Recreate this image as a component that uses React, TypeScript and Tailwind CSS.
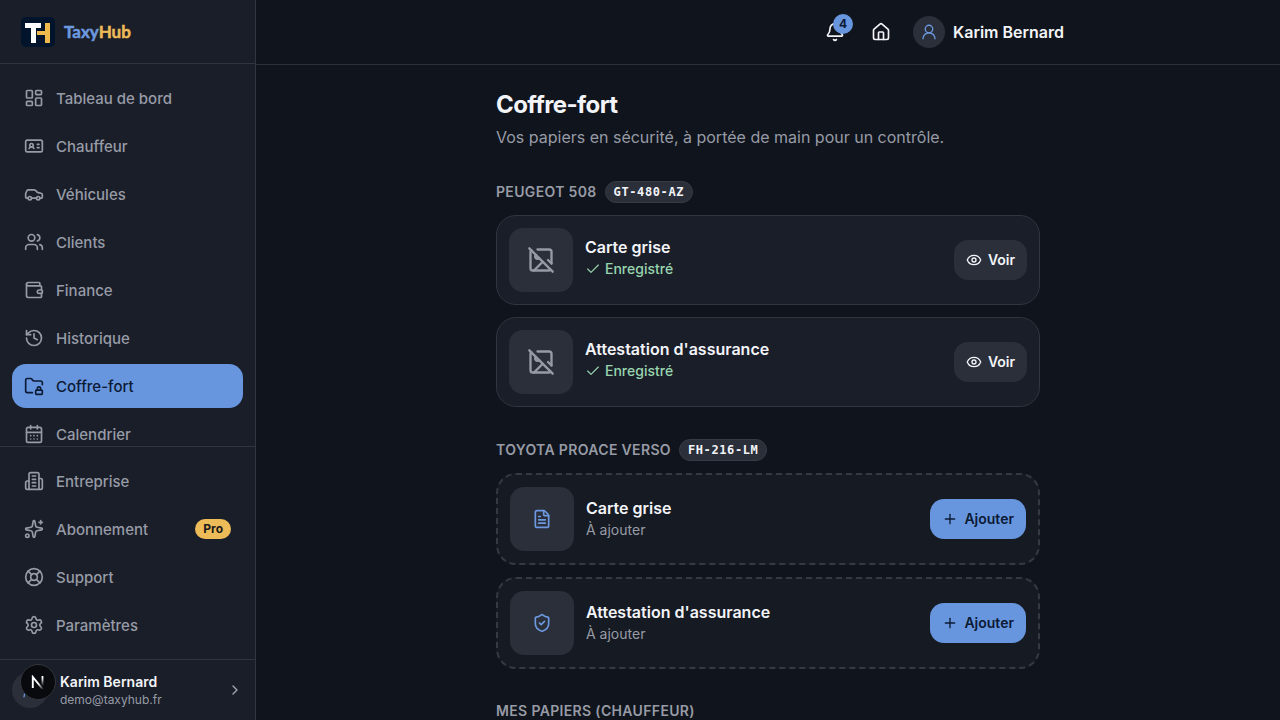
import type { ReactNode } from 'react'
import {
  Bell, CalendarDays, Car, Check, ChevronRight, Eye, FileText, FolderLock, History, House, IdCard,
  ImageOff, LayoutDashboard, LifeBuoy, Plus, Settings, ShieldCheck, Sparkles, UserRound, Users, Wallet,
} from 'lucide-react'
import type { LucideIcon } from 'lucide-react'

interface NavEntry {
  label: string
  icon: LucideIcon | typeof Building
  active?: boolean
  badge?: string
}

interface Doc {
  title: string
  icon: LucideIcon
}

const mainNav: NavEntry[] = [
  { label: 'Tableau de bord', icon: LayoutDashboard },
  { label: 'Chauffeur', icon: IdCard },
  { label: 'Véhicules', icon: Car },
  { label: 'Clients', icon: Users },
  { label: 'Finance', icon: Wallet },
  { label: 'Historique', icon: History },
  { label: 'Coffre-fort', icon: FolderLock, active: true },
  { label: 'Calendrier', icon: CalendarDays },
]

const secondaryNav: NavEntry[] = [
  { label: 'Entreprise', icon: Building },
  { label: 'Abonnement', icon: Sparkles, badge: 'Pro' },
  { label: 'Support', icon: LifeBuoy },
  { label: 'Paramètres', icon: Settings },
]

const docs: Doc[] = [
  { title: 'Carte grise', icon: FileText },
  { title: "Attestation d'assurance", icon: ShieldCheck },
]

function Building({ size = 24, strokeWidth = 2, className }: { size?: number | string; strokeWidth?: number | string; className?: string }) {
  return (
    <svg width={size} height={size} viewBox="0 0 24 24" fill="none" stroke="currentColor" strokeWidth={strokeWidth}
      strokeLinecap="round" strokeLinejoin="round" className={className}>
      <path d="M6 22V4a2 2 0 0 1 2-2h8a2 2 0 0 1 2 2v18Z" />
      <path d="M6 12H4a2 2 0 0 0-2 2v6a2 2 0 0 0 2 2h2" />
      <path d="M18 9h2a2 2 0 0 1 2 2v9a2 2 0 0 1-2 2h-2" />
      <path d="M10 6h4M10 10h4M10 14h4M10 18h4" />
    </svg>
  )
}

function Logo() {
  return (
    <div className="flex items-center gap-2">
      <svg width="36" height="30" viewBox="0 0 36 30">
        <rect x="1" width="34" height="30" rx="5" fill="#02142c" />
        <path d="M5 6h16v5h-5v15h-5V11H5z" fill="#fff" />
        <path d="M25 6h5v20h-5v-8h-8v-4h8z" fill="#f0b94b" />
      </svg>
      <span className="text-[17px] font-bold leading-6 font-['Lato',sans-serif] text-[#6c99df] [-webkit-text-stroke:0.5px_currentColor]">
        Taxy<span className="text-[#edbb57]">Hub</span>
      </span>
    </div>
  )
}

function NavItem({ item }: { item: NavEntry }) {
  const Icon = item.icon
  return (
    <a className={`flex h-11 shrink-0 items-center gap-3 rounded-[14px] px-3 text-[15px] font-medium ${item.active ? 'bg-[#6896de] text-[#0b1a35]' : 'text-[#979ba6]'}`}>
      <Icon size={20} strokeWidth={2} className="shrink-0" />
      <span className="pt-0.5">{item.label}</span>
      {item.badge && (
        <span className="ml-auto rounded-full bg-[#edbb57] px-2 text-xs leading-5 font-bold text-[#1b1a1c]">{item.badge}</span>
      )}
    </a>
  )
}

function Sidebar() {
  return (
    <aside className="flex w-64 shrink-0 flex-col border-r border-[#30353f] bg-[#1a1e29]">
      <div className="flex h-16 shrink-0 items-center border-b border-[#30353f] px-5">
        <Logo />
      </div>
      <nav className="flex min-h-0 flex-1 flex-col gap-1 overflow-hidden p-3">
        {mainNav.map(item => <NavItem key={item.label} item={item} />)}
      </nav>
      <nav className="flex shrink-0 flex-col gap-1 border-t border-[#30353f] p-3">
        {secondaryNav.map(item => <NavItem key={item.label} item={item} />)}
      </nav>
      <div className="relative flex h-[61px] shrink-0 items-center gap-3 border-t border-[#30353f] px-3">
        <div className="flex h-9 w-9 items-center justify-center rounded-full bg-[#2a2f3a] text-[#6c99df]">
          <UserRound size={18} strokeWidth={1.75} />
        </div>
        <div className="flex-1 pt-0.5">
          <p className="text-sm leading-[18px] font-semibold text-[#f3f4f8]">Karim Bernard</p>
          <p className="text-xs leading-[18px] text-[#979ba6]">demo@taxyhub.fr</p>
        </div>
        <ChevronRight size={16} className="text-[#a3a6af]" />
        <DevBadge />
      </div>
    </aside>
  )
}

// Floating dev tools button, sits over the avatar
function DevBadge() {
  return (
    <div className="absolute top-1 left-5 flex h-9 w-9 items-center justify-center rounded-full border border-[#33363d] bg-[#080a0d]">
      <svg width="14" height="14" viewBox="0 0 14 14" fill="none">
        <defs>
          <linearGradient id="n-diag" x1="8" y1="8" x2="13" y2="14" gradientUnits="userSpaceOnUse">
            <stop stopColor="#fff" />
            <stop offset="1" stopColor="#fff" stopOpacity="0" />
          </linearGradient>
          <linearGradient id="n-stem" x1="11" y1="3" x2="11" y2="11" gradientUnits="userSpaceOnUse">
            <stop stopColor="#fff" />
            <stop offset="1" stopColor="#fff" stopOpacity="0" />
          </linearGradient>
        </defs>
        <path d="M1.800 13V2L12 14.500" stroke="url(#n-diag)" strokeWidth="1.900" />
        <path d="M11.500 1v10" stroke="url(#n-stem)" strokeWidth="1.800" />
      </svg>
    </div>
  )
}

function Header() {
  return (
    <header className="h-[65px] shrink-0 border-b border-[#2b3039]">
      <div className="mx-auto flex h-full max-w-2xl items-center justify-end px-10 text-[#f3f4f8]">
        <div className="relative mr-[26px]">
          <Bell size={20} strokeWidth={2} />
          <span className="absolute -top-2 left-2 flex h-5 w-5 items-center justify-center rounded-full bg-[#6896de] text-xs font-bold text-[#0b1a35]">4</span>
        </div>
        <House size={20} strokeWidth={2} className="mr-[22px]" />
        <div className="mr-2 flex h-8 w-8 items-center justify-center rounded-full bg-[#2a2f3a] text-[#6c99df]">
          <UserRound size={18} strokeWidth={1.75} />
        </div>
        <span className="font-semibold">Karim Bernard</span>
      </div>
    </header>
  )
}

function Section({ title, plate, children }: { title: string; plate?: string; children?: ReactNode }) {
  return (
    <section className="mt-8">
      <div className="mb-3 flex items-center gap-2">
        <h2 className="text-sm font-semibold tracking-[0.34px] text-[#979ba6] uppercase">{title}</h2>
        {plate && (
          <span className="flex h-[22px] items-center rounded-full border border-[#363b46] bg-[#2a2f3a] px-2 font-['DejaVu_Sans_Mono',monospace] text-xs font-bold tracking-[0.6px] text-[#f3f4f8]">{plate}</span>
        )}
      </div>
      <div className="flex flex-col gap-3">{children}</div>
    </section>
  )
}

function SavedCard({ doc }: { doc: Doc }) {
  return (
    <div className="flex items-center gap-3 rounded-[20px] border border-[#30353f] bg-[#1a1e29] p-3">
      <div className="flex h-16 w-16 items-center justify-center rounded-[14px] bg-[#2a2f3a] text-[#979ba6]">
        <ImageOff size={28} strokeWidth={2} />
      </div>
      <div className="flex-1 pb-1.5">
        <p className="font-semibold text-[#f3f4f8]">{doc.title}</p>
        <p className="flex items-center gap-1 text-sm font-medium text-[#98d5ae]">
          <Check size={16} strokeWidth={1.75} />Enregistré
        </p>
      </div>
      <button className="flex h-10 items-center gap-1.5 rounded-[14px] bg-[#2a2f3a] px-3 text-sm font-semibold text-[#f3f4f8]">
        <Eye size={16} />Voir
      </button>
    </div>
  )
}

function MissingCard({ doc }: { doc: Doc }) {
  const Icon = doc.icon
  return (
    <div className="flex items-center gap-3 rounded-[20px] border-2 border-dashed border-[#343943] bg-[#161a23] p-3">
      <div className="flex h-16 w-16 items-center justify-center rounded-[14px] bg-[#2a2f3a] text-[#6c99df]">
        <Icon size={20} strokeWidth={2} />
      </div>
      <div className="flex-1 pb-0.5">
        <p className="font-semibold text-[#f3f4f8]">{doc.title}</p>
        <p className="text-sm text-[#979ba6]">À ajouter</p>
      </div>
      <button className="flex h-10 items-center gap-1.5 rounded-[14px] bg-[#6896de] px-3 text-sm font-semibold text-[#0b1a35]">
        <Plus size={16} strokeWidth={2} />Ajouter
      </button>
    </div>
  )
}

export default function App() {
  return (
    <div className="flex h-screen overflow-hidden bg-[#10141c] font-['Inter',sans-serif] text-base antialiased">
      <Sidebar />
      <div className="flex min-w-0 flex-1 flex-col">
        <Header />
        <main className="min-h-0 flex-1 overflow-hidden">
          <div className="mx-auto w-[592px] p-6">
            <h1 className="text-2xl font-bold tracking-tight text-[#f3f4f8]">Coffre-fort</h1>
            <p className="mt-1 text-[#979ba6]">Vos papiers en sécurité, à portée de main pour un contrôle.</p>
            <Section title="Peugeot 508" plate="GT-480-AZ">
              {docs.map(d => <SavedCard key={d.title} doc={d} />)}
            </Section>
            <Section title="Toyota Proace Verso" plate="FH-216-LM">
              {docs.map(d => <MissingCard key={d.title} doc={d} />)}
            </Section>
            <Section title="Mes papiers (chauffeur)" />
          </div>
        </main>
      </div>
    </div>
  )
}
